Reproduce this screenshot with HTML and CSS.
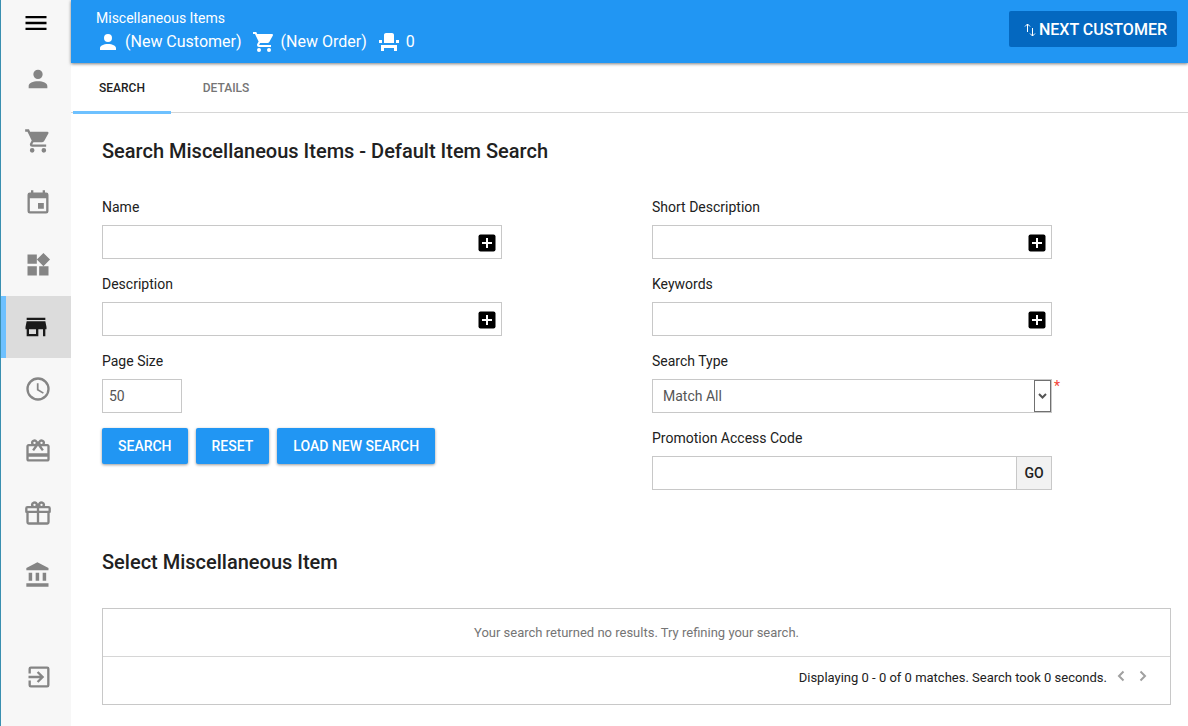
FILE: index.html
```html
<!DOCTYPE html>
<html lang="en">
<head>
<meta charset="utf-8">
<meta name="viewport" content="width=device-width, initial-scale=1">
<title>Miscellaneous Items</title>
<link rel="stylesheet" href="styles.css">
</head>
<body>
<div class="app">
  <nav class="sidebar" aria-label="Main">
    <button class="menu-toggle" type="button" aria-label="Menu"><svg class="nav-icon" viewBox="0 0 24 24"><path d="M3 6h18v2H3V6m0 5h18v2H3v-2m0 5h18v2H3v-2z"/></svg></button>
    <a class="nav-item" href="#" aria-label="Customer"><svg class="nav-icon" viewBox="0 0 24 24"><path d="M12 4a4 4 0 1 1 0 8 4 4 0 0 1 0-8m0 10c4.42 0 8 1.790 8 4v2H4v-2c0-2.210 3.580-4 8-4z"/></svg></a>
    <a class="nav-item" href="#" aria-label="Order"><svg class="nav-icon" viewBox="0 0 24 24"><path d="M17 18a2 2 0 1 1 0 4 2 2 0 0 1 0-4M1 2h3.270l.94 2H20a1 1 0 0 1 1 1c0 .17-.05.34-.12.5l-3.580 6.470c-.34.61-1 1.030-1.750 1.030H8.100l-.9 1.630-.03.12a.25.25 0 0 0 .25.25H19v2H7a2 2 0 0 1-2-2c0-.35.09-.68.240-.96l1.360-2.450L3 4H1V2m6 16a2 2 0 1 1 0 4 2 2 0 0 1 0-4z"/></svg></a>
    <a class="nav-item" href="#" aria-label="Events"><svg class="nav-icon" viewBox="0 0 24 24"><path d="M19 19H5V8h14m-3-7v2H8V1H6v2H5a2 2 0 0 0-2 2v14a2 2 0 0 0 2 2h14a2 2 0 0 0 2-2V5a2 2 0 0 0-2-2h-1V1m-1 11h-5v5h5v-5z"/></svg></a>
    <a class="nav-item" href="#" aria-label="Bundles"><svg class="nav-icon" viewBox="0 0 24 24"><path d="M3 3h8v8H3V3m0 10h8v8H3v-8m10 0h8v8h-8v-8m3.660-11.310L22.310 7.340 16.660 13 11 7.340l5.660-5.650z"/></svg></a>
    <a class="nav-item nav-item-active" href="#" aria-label="Miscellaneous Items" aria-current="page"><svg class="nav-icon" viewBox="0 0 24 24"><path d="M12 18H6v-4h6m9 0v-2l-1-5H4l-1 5v2h1v6h10v-6h4v6h2v-6m0-10H4v2h16V4z"/></svg></a>
    <a class="nav-item" href="#" aria-label="History"><svg class="nav-icon" viewBox="0 0 24 24"><path d="M12 20a8 8 0 1 0 0-16 8 8 0 0 0 0 16m0-18a10 10 0 1 1 0 20 10 10 0 0 1 0-20m.5 5v5.250l4.500 2.670-.75 1.230L11 13V7h1.500z"/></svg></a>
    <a class="nav-item" href="#" aria-label="Gift Cards"><svg class="nav-icon" viewBox="0 0 24 24"><path d="M20 6h-2.180A3 3 0 0 0 12.500 3.350L12 4.020l-.5-.68A3 3 0 0 0 6.180 6H4c-1.110 0-1.990.89-1.990 2L2 19c0 1.110.89 2 2 2h16c1.110 0 2-.89 2-2V8c0-1.110-.89-2-2-2zm-5-2a1 1 0 1 1 0 2 1 1 0 0 1 0-2zM9 4a1 1 0 1 1 0 2 1 1 0 0 1 0-2zm11 15H4v-2h16v2zm0-5H4V8h5.080L7 10.830 8.620 12 12 7.400l3.380 4.600L17 10.830 14.920 8H20v6z"/></svg></a>
    <a class="nav-item" href="#" aria-label="Gifts"><svg class="nav-icon" viewBox="0 0 24 24"><path d="M22 12v8a2 2 0 0 1-2 2H4a2 2 0 0 1-2-2v-8a1 1 0 0 1-1-1V8a2 2 0 0 1 2-2h3.170A3 3 0 0 1 12 4a3 3 0 0 1 5.830 2H21a2 2 0 0 1 2 2v3a1 1 0 0 1-1 1M4 20h7v-8H4v8m16 0v-8h-7v8h7M9 4a1 1 0 1 0 0 2 1 1 0 0 0 0-2m6 0a1 1 0 1 0 0 2 1 1 0 0 0 0-2M3 8v2h8V8H3m10 0v2h8V8h-8z"/></svg></a>
    <a class="nav-item" href="#" aria-label="Accounts"><svg class="nav-icon" viewBox="0 0 24 24"><path d="M11.500 1L2 6v2h19V6m-5 4v7h3v-7M2 22h19v-3H2m8-9v7h3v-7m-9 0v7h3v-7H4z"/></svg></a>
    <a class="nav-item nav-exit" href="#" aria-label="Exit"><svg class="nav-icon" viewBox="0 0 24 24"><path d="M19 3H5a2 2 0 0 0-2 2v4h2V5h14v14H5v-4H3v4a2 2 0 0 0 2 2h14a2 2 0 0 0 2-2V5a2 2 0 0 0-2-2m-8.920 12.580L11.500 17l5-5-5-5-1.420 1.410L12.670 11H3v2h9.670l-2.590 2.580z"/></svg></a>
  </nav>

  <div class="main">
    <header class="header">
      <div class="header-info">
        <div class="header-title">Miscellaneous Items</div>
        <div class="header-status">
          <span class="status"><svg class="status-icon" viewBox="0 0 24 24"><path d="M12 4a4 4 0 1 1 0 8 4 4 0 0 1 0-8m0 10c4.420 0 8 1.790 8 4v2H4v-2c0-2.210 3.580-4 8-4z"/></svg>(New Customer)</span>
          <span class="status"><svg class="status-icon" viewBox="0 0 24 24"><path d="M17 18a2 2 0 1 1 0 4 2 2 0 0 1 0-4M1 2h3.270l.94 2H20a1 1 0 0 1 1 1c0 .17-.05.34-.12.5l-3.580 6.470c-.34.61-1 1.030-1.750 1.030H8.100l-.9 1.630-.03.12a.25.25 0 0 0 .25.25H19v2H7a2 2 0 0 1-2-2c0-.35.09-.68.240-.96l1.360-2.450L3 4H1V2m6 16a2 2 0 1 1 0 4 2 2 0 0 1 0-4z"/></svg>(New Order)</span>
          <span class="status"><svg class="status-icon" viewBox="0 0 24 24"><path d="M4 18v3h3v-3h10v3h3v-6H4v3zm15-8h3v3h-3v-3zM2 10h3v3H2v-3zm15 3H7V5c0-1.100.9-2 2-2h6c1.100 0 2 .9 2 2v8z"/></svg>0</span>
        </div>
      </div>
      <button class="next-button" type="button"><svg class="next-icon" viewBox="0 0 16 18"><path d="M5.500 3v8M3 5.500L5.500 3 8 5.500M10.500 7v8M8 12.500l2.500 2.500 2.500-2.500"/></svg>NEXT CUSTOMER</button>
    </header>

    <div class="tabs" role="tablist">
      <button class="tab tab-active" type="button" role="tab" aria-selected="true">SEARCH</button>
      <button class="tab" type="button" role="tab" aria-selected="false">DETAILS</button>
    </div>

    <main class="content">
      <h1 class="heading">Search Miscellaneous Items - Default Item Search</h1>
      <form class="search-form">
        <div class="column">
          <div class="field">
            <label class="label" for="name">Name</label>
            <div class="box"><input class="input" id="name" type="text"><button class="add" type="button" aria-label="Add name"><svg class="add-icon" viewBox="0 0 18 18"><rect width="17" height="17" x="0.500" y="0.500" rx="2"/><path d="M9 4v10M4 9h10"/></svg></button></div>
          </div>
          <div class="field">
            <label class="label" for="description">Description</label>
            <div class="box"><input class="input" id="description" type="text"><button class="add" type="button" aria-label="Add description"><svg class="add-icon" viewBox="0 0 18 18"><rect width="17" height="17" x="0.500" y="0.500" rx="2"/><path d="M9 4v10M4 9h10"/></svg></button></div>
          </div>
          <div class="field">
            <label class="label" for="page-size">Page Size</label>
            <div class="box box-small"><input class="input" id="page-size" type="text" value="50"></div>
          </div>
          <div class="actions">
            <button class="button" type="button">SEARCH</button>
            <button class="button" type="reset">RESET</button>
            <button class="button" type="button">LOAD NEW SEARCH</button>
          </div>
        </div>
        <div class="column">
          <div class="field">
            <label class="label" for="short-description">Short Description</label>
            <div class="box"><input class="input" id="short-description" type="text"><button class="add" type="button" aria-label="Add short description"><svg class="add-icon" viewBox="0 0 18 18"><rect width="17" height="17" x="0.500" y="0.500" rx="2"/><path d="M9 4v10M4 9h10"/></svg></button></div>
          </div>
          <div class="field">
            <label class="label" for="keywords">Keywords</label>
            <div class="box"><input class="input" id="keywords" type="text"><button class="add" type="button" aria-label="Add keywords"><svg class="add-icon" viewBox="0 0 18 18"><rect width="17" height="17" x="0.500" y="0.500" rx="2"/><path d="M9 4v10M4 9h10"/></svg></button></div>
          </div>
          <div class="field">
            <label class="label" for="search-type">Search Type</label>
            <div class="required-row">
              <div class="box">
                <select class="select" id="search-type"><option>Match All</option><option>Match Any</option></select>
                <span class="select-arrow"><svg class="arrow-icon" viewBox="0 0 9 6"><path d="M1 1l3.500 3.500L8 1"/></svg></span>
              </div>
              <span class="required">*</span>
            </div>
          </div>
          <div class="field">
            <label class="label" for="promo">Promotion Access Code</label>
            <div class="box"><input class="input" id="promo" type="text"><button class="go" type="button">GO</button></div>
          </div>
        </div>
      </form>

      <h2 class="heading heading-results">Select Miscellaneous Item</h2>
      <section class="results">
        <p class="empty">Your search returned no results. Try refining your search.</p>
        <div class="pager">
          <span>Displaying 0 - 0 of 0 matches. Search took 0 seconds.</span>
          <div class="pager-buttons">
            <button class="page-button" type="button" aria-label="Previous page"><svg class="page-icon" viewBox="0 0 8 12"><path d="M6.500 1.500L2 6l4.500 4.500"/></svg></button>
            <button class="page-button" type="button" aria-label="Next page"><svg class="page-icon" viewBox="0 0 8 12"><path d="M1.500 1.500L6 6l-4.500 4.500"/></svg></button>
          </div>
        </div>
      </section>
    </main>
  </div>
</div>
</body>
</html>
```

FILE: styles.css
```css
* { box-sizing: border-box; }

body {
  margin: 0;
  background: #fff;
  color: #212121;
  font: 14px/20px Roboto, "Liberation Sans", sans-serif;
}

button, input, select {
  margin: 0;
  padding: 0;
  border: 0;
  border-radius: 0;
  background: none;
  color: inherit;
  font: inherit;
}

button { cursor: pointer; }
svg { display: block; flex: none; fill: currentColor; }

.app { display: flex; min-height: 100vh; }

/* Sidebar */
.sidebar {
  display: flex;
  flex: none;
  flex-direction: column;
  width: 71px;
  padding-bottom: 18px;
  border-left: 1px solid #3a8fb0;
  background: #f7f7f7;
  color: #858585;
}
.menu-toggle {
  display: flex;
  align-items: center;
  justify-content: center;
  height: 48px;
  padding-bottom: 3px;
  color: #000;
}
.nav-item {
  display: flex;
  align-items: center;
  justify-content: center;
  height: 62px;
  padding-left: 4px;
  color: inherit;
}
.nav-item-active {
  padding-left: 0;
  background: #dcdcdc;
  box-shadow: inset 5px 0 #6ec1ff;
  color: #1a1a1a;
}
.nav-exit { margin-top: auto; padding-left: 6px; }
.nav-icon { width: 28px; height: 28px; }

/* Header */
.main { display: flex; flex: 1; flex-direction: column; min-width: 0; }
.header {
  display: flex;
  align-items: flex-start;
  justify-content: space-between;
  padding: 8px 11px 9px 25px;
  background: #2196f3;
  box-shadow: 0 1px 3px rgba(0, 0, 0, 0.5);
  color: #fff;
}
.header-status { display: flex; gap: 10px; padding-top: 1px; font-size: 16px; line-height: 25px; }
.status { display: flex; align-items: center; gap: 5px; }
.status-icon { width: 24px; height: 24px; }
.next-button {
  display: flex;
  align-items: center;
  gap: 1px;
  height: 36px;
  margin-top: 3px;
  padding: 1px 10px 0 13px;
  border-radius: 2px;
  background: #0468c0;
  font-size: 16px;
  font-weight: 500;
}
.next-icon { width: 16px; height: 18px; fill: none; stroke: currentColor; }

/* Tabs */
.tabs {
  display: flex;
  gap: 6px;
  padding-left: 2px;
  border-bottom: 1px solid #d6d6d6;
}
.tab {
  min-width: 98px;
  height: 51px;
  margin-bottom: -2px;
  padding-top: 2px;
  border-bottom: 3px solid transparent;
  color: #757575;
  font-size: 12px;
  font-weight: 500;
}
.tab-active { border-color: #6ec1ff; color: #212121; }

/* Content */
.content { padding: 26px 17px 20px 31px; }
.heading { margin: 0 0 34px; font-size: 20px; line-height: 24px; font-weight: 500; }
.search-form { display: grid; grid-template-columns: 1fr 1fr; gap: 31px; }
.column { display: flex; flex-direction: column; gap: 15px; }
.field { display: flex; flex-direction: column; gap: 8px; }
.box {
  display: flex;
  align-items: center;
  width: 100%;
  max-width: 400px;
  height: 34px;
  border: 1px solid #c8c8c8;
  background: #fff;
}
.box-small { width: 80px; }
.input { flex: 1; min-width: 0; height: 100%; padding: 0 6px; color: #555; }
.add { padding-top: 2px; margin-right: 5px; }
.add-icon { width: 18px; height: 18px; fill: #000; stroke: #fff; stroke-width: 2; }
.add-icon rect { stroke: none; }
.required-row { display: flex; gap: 2px; }
.required { color: #f44336; line-height: 14px; }
.select { flex: 1; min-width: 0; height: 100%; padding: 0 10px; appearance: none; color: #555; }
.select-arrow {
  display: flex;
  align-items: center;
  justify-content: center;
  width: 17px;
  height: 100%;
  border: 1px solid #707070;
  pointer-events: none;
}
.arrow-icon { width: 9px; height: 6px; fill: none; stroke: #555; stroke-width: 2; }
.go {
  width: 35px;
  height: 100%;
  border-left: 1px solid #c8c8c8;
  background: #f2f2f2;
  font-weight: 500;
}
.actions { display: flex; flex-wrap: wrap; gap: 8px; }
.button {
  height: 36px;
  padding: 0 16px;
  border-radius: 2px;
  background: #2196f3;
  box-shadow: 0 1px 3px rgba(0, 0, 0, 0.4);
  color: #fff;
  font-weight: 500;
}

/* Results */
.heading-results { margin: 60px 0 34px; }
.results { border: 1px solid #c8c8c8; font-size: 13px; }
.empty {
  margin: 0;
  padding: 14px 14px 13px;
  border-bottom: 1px solid #d6d6d6;
  color: #757575;
  text-align: center;
}
.pager {
  display: flex;
  align-items: flex-start;
  justify-content: flex-end;
  gap: 10px;
  padding: 11px 23px 16px;
}
.pager-buttons { display: flex; gap: 14px; padding-top: 2px; }
.page-icon { width: 8px; height: 12px; fill: none; stroke: #a0a0a0; stroke-width: 2; }
```
